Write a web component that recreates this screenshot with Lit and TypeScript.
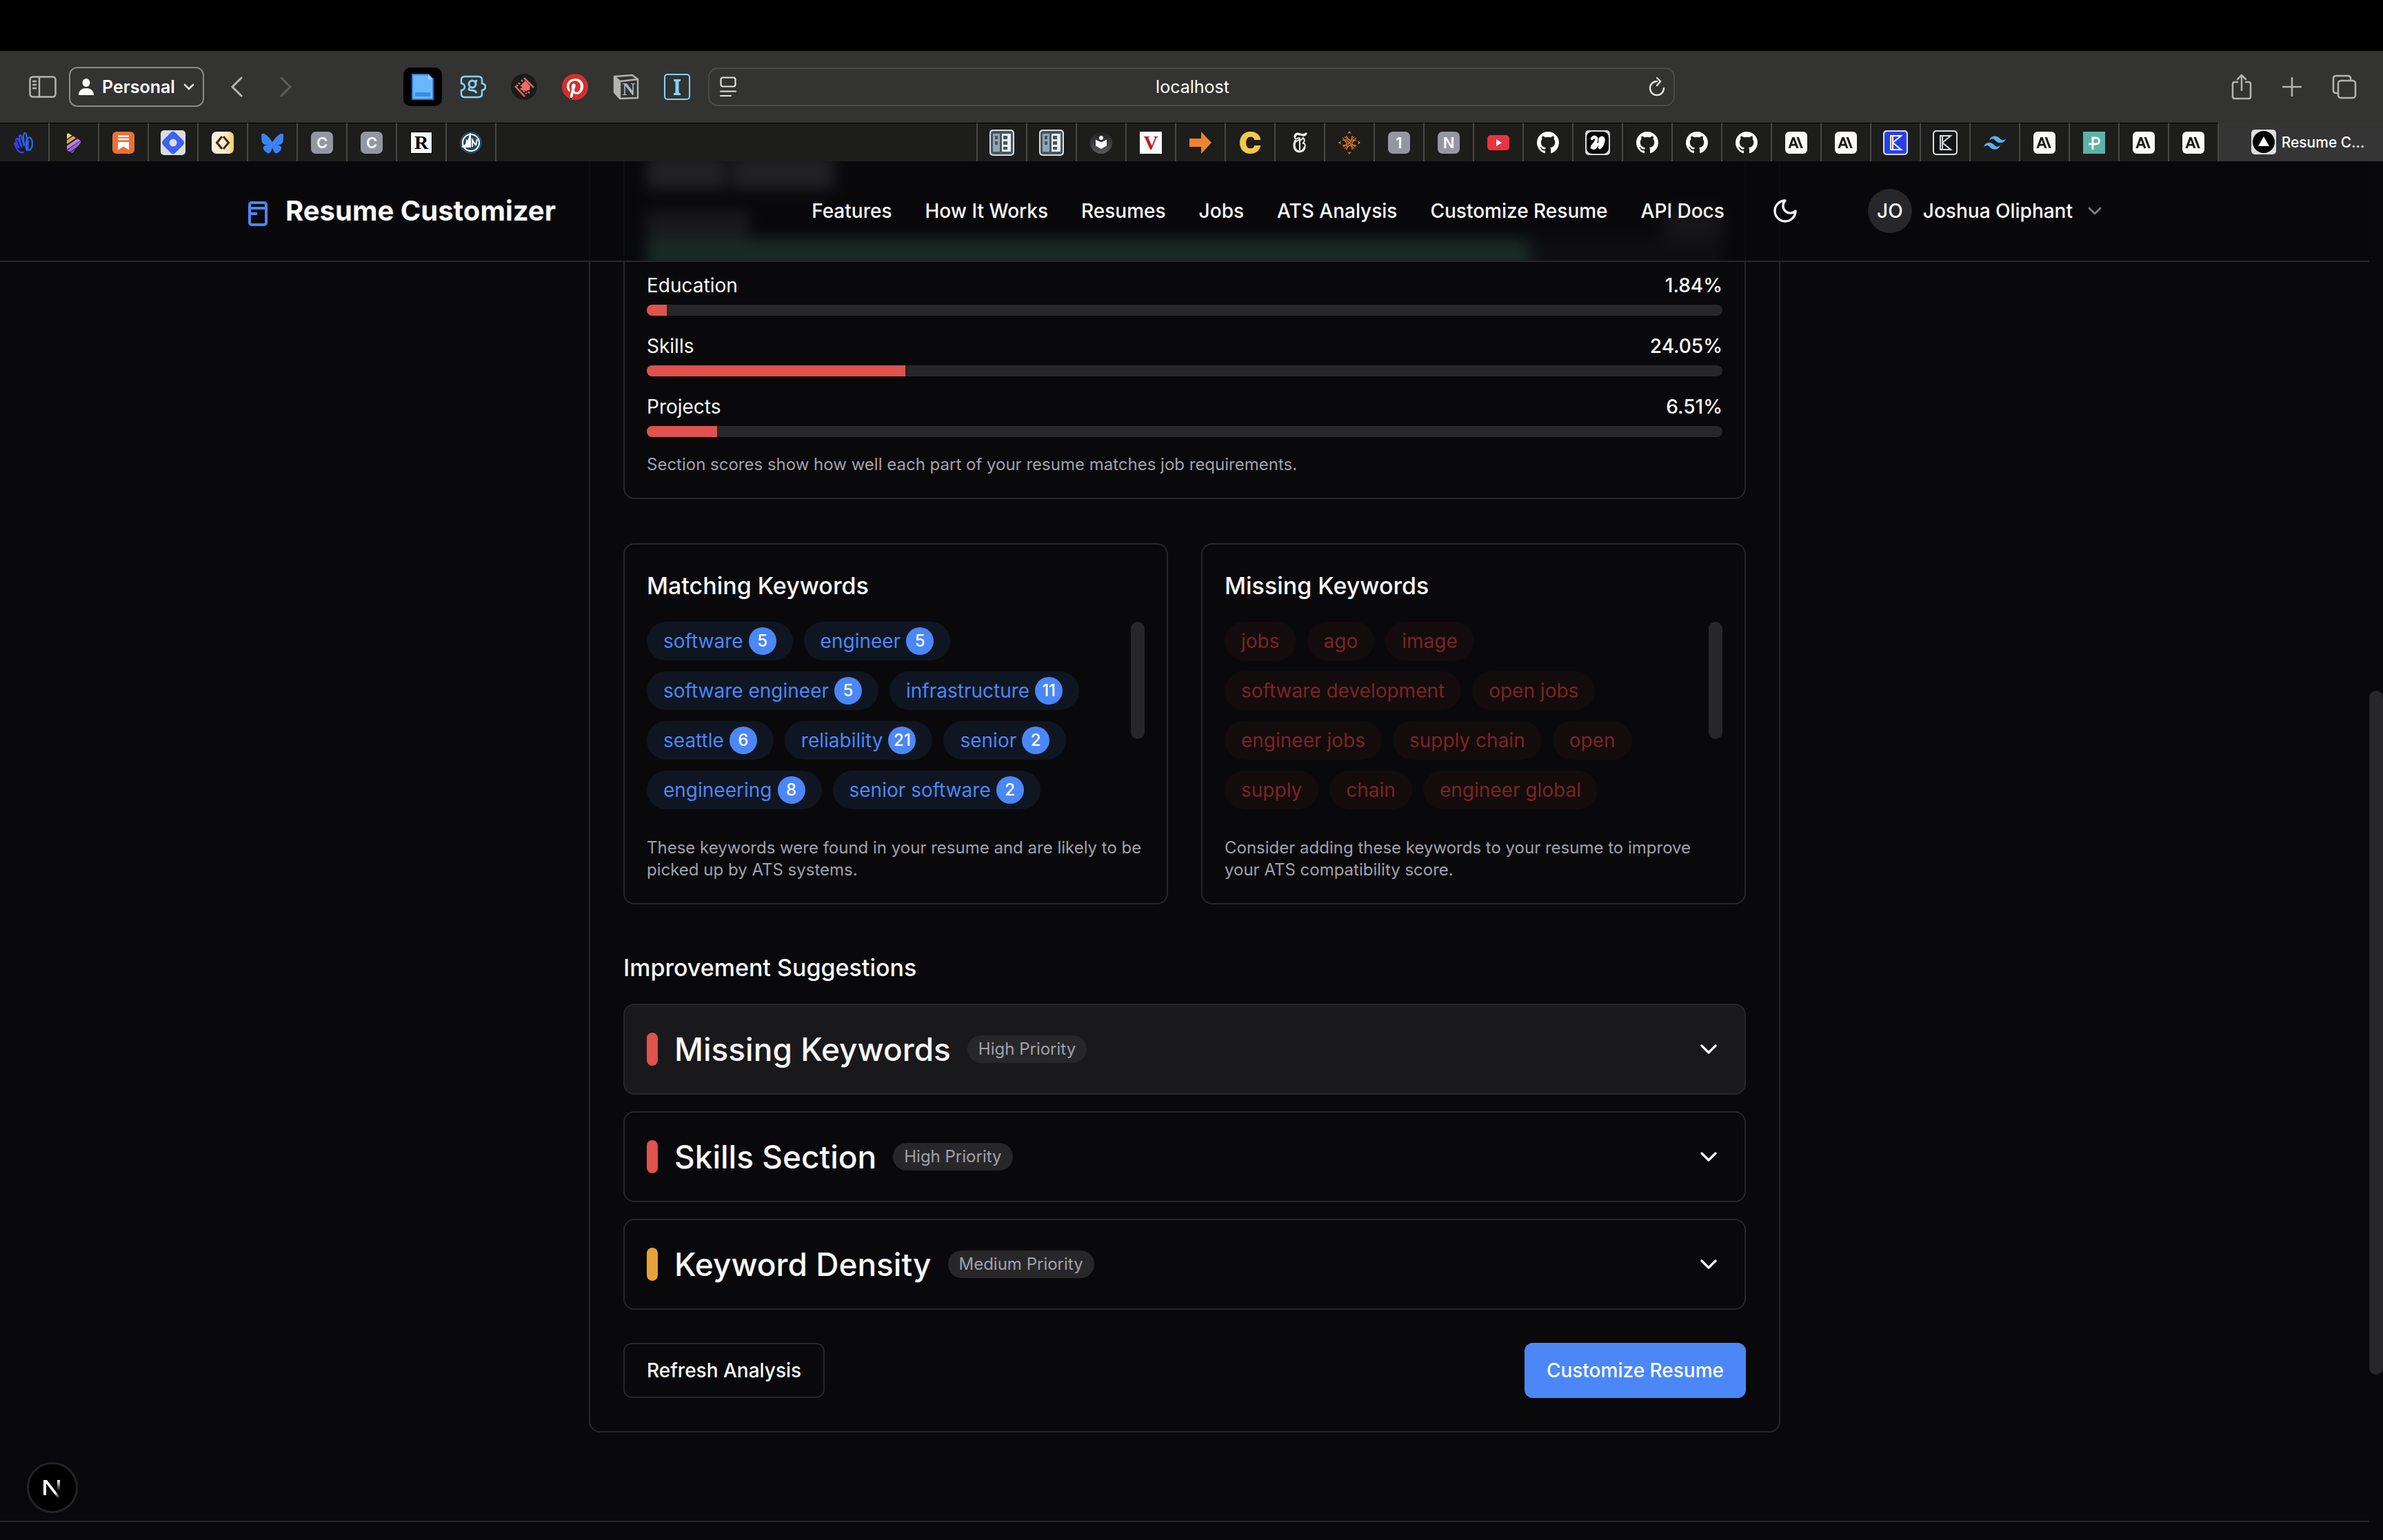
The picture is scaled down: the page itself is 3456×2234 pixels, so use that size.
import { LitElement, html, svg, css, nothing, type SVGTemplateResult, type TemplateResult } from "lit";
import { customElement, state } from "lit/decorators.js";
import { classMap } from "lit/directives/class-map.js";

/* ---------- icon artwork ---------- */

const GITHUB =
  "M8 0C3.58 0 0 3.58 0 8c0 3.54 2.29 6.53 5.47 7.59.4.07.55-.17.55-.38 0-.19-.01-.82-.01-1.49-2.01.37-2.53-.49-2.69-.94-.09-.23-.48-.94-.82-1.13-.28-.15-.68-.52-.01-.53.63-.01 1.08.58 1.23.82.72 1.21 1.87.87 2.33.66.07-.52.28-.87.51-1.07-1.78-.2-3.64-.89-3.64-3.95 0-.87.31-1.59.82-2.15-.08-.2-.36-1.02.08-2.12 0 0 .67-.21 2.2.82.64-.18 1.32-.27 2-.27s1.36.09 2 .27c1.53-1.04 2.2-.82 2.2-.82.44 1.1.16 1.92.08 2.12.51.56.82 1.27.82 2.15 0 3.07-1.87 3.75-3.65 3.95.29.25.54.73.54 1.48 0 1.07-.01 1.93-.01 2.2 0 .21.15.46.55.38A8.01 8.01 0 0 0 16 8c0-4.42-3.58-8-8-8z";
const BLUESKY =
  "M12 10.8c-1.087-2.114-4.046-6.053-6.798-7.995C2.566.944 1.561 1.266.902 1.565.139 1.908 0 3.08 0 3.768c0 .69.378 5.65.624 6.479.815 2.736 3.713 3.66 6.383 3.364-3.912.58-7.387 2.005-2.83 7.078 5.013 5.19 6.87-1.113 7.823-4.308.953 3.195 2.05 9.271 7.733 4.308 4.267-4.308 1.172-6.498-2.74-7.078 2.67.297 5.568-.628 6.383-3.364.246-.828.624-5.79.624-6.478 0-.69-.139-1.861-.902-2.206-.659-.298-1.664-.62-4.3 1.24C16.046 4.748 13.087 8.687 12 10.8Z";
const PINTEREST =
  "M12.017 0C5.396 0 .029 5.367.029 11.987c0 5.079 3.158 9.417 7.618 11.162-.105-.949-.199-2.403.041-3.439.219-.937 1.406-5.957 1.406-5.957s-.359-.72-.359-1.781c0-1.663.967-2.911 2.168-2.911 1.024 0 1.518.769 1.518 1.688 0 1.029-.653 2.567-.992 3.992-.285 1.193.6 2.165 1.775 2.165 2.128 0 3.768-2.245 3.768-5.487 0-2.861-2.063-4.869-5.008-4.869-3.41 0-5.409 2.562-5.409 5.199 0 1.033.394 2.143.889 2.741.099.12.112.225.085.345-.09.375-.293 1.199-.334 1.363-.053.225-.172.271-.401.165-1.495-.69-2.433-2.878-2.433-4.646 0-3.776 2.748-7.252 7.92-7.252 4.158 0 7.392 2.967 7.392 6.923 0 4.135-2.607 7.462-6.233 7.462-1.214 0-2.354-.629-2.758-1.379l-.749 2.848c-.269 1.045-1.004 2.352-1.498 3.146 1.123.345 2.306.535 3.55.535 6.607 0 11.985-5.365 11.985-11.987C23.97 5.39 18.592.026 11.985.026L12.017 0z";
const TAILWIND =
  "M12.001,4.8c-3.2,0-5.2,1.6-6,4.8c1.2-1.6,2.6-2.2,4.2-1.8c0.913,0.228,1.565,0.89,2.288,1.624C13.666,10.618,15.027,12,18.001,12c3.2,0,5.2-1.6,6-4.8c-1.2,1.6-2.6,2.2-4.2,1.8c-0.913-0.228-1.565-0.89-2.288-1.624C16.337,6.182,14.976,4.8,12.001,4.8z M6.001,12c-3.2,0-5.2,1.6-6,4.8c1.2-1.6,2.6-2.2,4.2-1.8c0.913,0.228,1.565,0.89,2.288,1.624c1.177,1.194,2.538,2.576,5.512,2.576c3.2,0,5.2-1.6,6-4.8c-1.2,1.6-2.6,2.2-4.2,1.8c-0.913-0.228-1.565-0.89-2.288-1.624C10.337,13.382,8.976,12,6.001,12z";

const icon = (w: number, h: number, body: SVGTemplateResult | SVGTemplateResult[]) =>
  html`<svg width=${w} height=${h} viewBox="0 0 ${w} ${h}" aria-hidden="true">${body}</svg>`;

const chevronDown = (size: number, cls = "") => html`
  <svg class=${cls} width=${size} height=${size} viewBox="0 0 24 24" fill="none" stroke="currentColor"
    stroke-width="2" stroke-linecap="round" stroke-linejoin="round" aria-hidden="true">
    <path d="m6 9 6 6 6-6" />
  </svg>`;

const letterTile = (letter: string) => svg`
  <rect x="2" y="2" width="32" height="32" rx="7" fill="#9596a2" />
  <text x="18" y="26" text-anchor="middle" font-size="22" font-weight="600" fill="#fff">${letter}</text>`;

const favicons: Record<string, () => SVGTemplateResult> = {
  hand: () => svg`
    <g fill="none" stroke="#3a3df0" stroke-width="2.4" stroke-linecap="round" stroke-linejoin="round">
      <path d="M17 32c-5 1-8-2-10-6-1-3-3-6-3-7 1-2 4 1 6 6" />
      <path d="M10 25C8 20 5 13 7 12c3-1 5 7 7 12" />
      <path d="M14 23C12 17 10 8 12 7c3 0 4 9 6 15" stroke="#2f50ee" />
      <path d="M18 21c-1-6-2-16 1-17 3 0 3 9 3 17" stroke="#2b63ee" />
      <path d="M22 29c-2-5-2-15 2-18 4-2 6 3 6 9 0 5-3 9-5 9-2-1-2-7-1-13" stroke="#2b63ee" />
    </g>`,
  stripes: () => svg`
    <defs><clipPath id="play"><path d="M8 3 28 15v3L16 33 8 29z" /></clipPath></defs>
    <g fill="none" stroke-width="4.500" clip-path="url(#play)">
      <path d="M4 12 18 2" stroke="#eed35c" stroke-width="6" />
      <path d="M4 20 26 5" stroke="#e4a354" />
      <path d="M4 28 32 9" stroke="#c07fe0" />
      <path d="M8 32 32 15" stroke="#a55be0" />
      <path d="M12 36 32 22" stroke="#5b7fd6" />
    </g>`,
  substack: () => svg`
    <rect x="2" y="2" width="32" height="32" rx="6" fill="#ed6f36" />
    <path d="M10 8.500h16M10 13h16" stroke="#fff" stroke-width="2.400" />
    <path d="M10 17h16v11.500l-8-5-8 5z" fill="#fff" />`,
  diamond: () => svg`
    <rect width="36" height="36" rx="5" fill="#dcdde0" />
    <path d="M14 4q4-5 8 0l10 10q4 4 0 8L22 32q-4 5-8 0L4 22q-4-4 0-8z" fill="#3a62f5" />
    <circle cx="18" cy="18" r="5.500" fill="#dcdde0" />`,
  gold: () => svg`
    <defs><linearGradient id="gold" x1="0" x2="1" y1="0" y2="0">
      <stop offset="0" stop-color="#fbeee0" /><stop offset=".65" stop-color="#fbeccb" /><stop offset="1" stop-color="#f2cd5a" />
    </linearGradient></defs>
    <rect x="2" y="2" width="32" height="32" rx="7" fill="url(#gold)" />
    <path d="M17 9 9.500 18l7.500 9M19 9l7.500 9-7.500 9" fill="none" stroke="#3a2716" stroke-width="3" />`,
  bluesky: () => svg`<path transform="translate(2 3) scale(1.340)" d=${BLUESKY} fill="#3b82f7" />`,
  c: () => letterTile("C"),
  one: () => letterTile("1"),
  n: () => letterTile("N"),
  r: () => svg`
    <rect x="2" y="2" width="32" height="32" fill="#000" /><rect x="3" y="3" width="30" height="30" fill="#f6f8fb" />
    <text x="18" y="27" text-anchor="middle" font-family="Liberation Serif, serif" font-size="28" font-weight="700" fill="#000">R</text>`,
  sail: () => svg`
    <circle cx="18" cy="18" r="16" fill="#234a60" />
    <circle cx="18" cy="18" r="12" fill="none" stroke="#fff" stroke-width="2" />
    <path d="M17 4v20H5l6-3 1-6 4 5zM20 24V14l5 8M25 22l2-9" fill="none" stroke="#fff" stroke-width="2" />
    <path d="M17 4v20H5l6-3z" fill="#fff" />`,
  panel: () => svg`
    <rect width="36" height="38" y="-1" rx="5" fill="#d8dde0" /><rect x="2" y="1" width="32" height="34" rx="4" fill="#465660" />
    <rect x="5" y="5" width="10" height="26" fill="#90a4b2" /><rect x="18" y="5" width="13" height="26" fill="#eceff4" />
    <path d="M8 8h4v5H8zM8 16h4v5H8zM20 8h6v5h-6zM20 16h6v5h-6zM20 24h6v4h-6z" fill="#465660" />`,
  reader: () => svg`
    <defs><linearGradient id="rd" x1="0" x2="0" y1="0" y2="1"><stop offset="0" stop-color="#202022" /><stop offset="1" stop-color="#5a5a5c" /></linearGradient></defs>
    <circle cx="18" cy="18" r="16" fill="url(#rd)" />
    <circle cx="18" cy="11" r="3" fill="#fff" /><path d="M10 13.500l8 4 8-4v9l-8 4.500-8-4.500z" fill="#fff" />`,
  v: () => svg`
    <rect x="2" y="2" width="32" height="32" fill="#fff" />
    <text x="18" y="28" text-anchor="middle" font-family="Liberation Serif, serif" font-size="29" font-weight="700" fill="#b8201f">V</text>`,
  arrow: () => svg`<path d="M2 12h17V2l15 16-15 16V24H2z" fill="#ef8330" />`,
  bigc: () => svg`<text x="18" y="34" text-anchor="middle" font-size="44" font-weight="900" fill="#f3c84b">C</text>`,
  times: () => svg`
    <g fill="none" stroke="#f0f0f0" stroke-linecap="round">
      <path d="M11 9c1-5 5-4 8-3s6 2 8-1" stroke-width="3.400" />
      <path d="M11 9c-1 4 3 4 5 2" stroke-width="1.800" />
      <path d="M12 15c-3 4-3 12 2 15 5 2 10 0 11-5" stroke-width="3.200" />
      <path d="M12 16c3 0 5-2 6-5M18 12v16M25 25c2-4 0-7-3-6 3-2 4-5 1-8l-3 3" stroke-width="2" />
    </g>`,
  lattice: () => svg`
    <g fill="none" stroke="#e2762d" stroke-width="1.600">
      <path d="M14 8q0 4 4 6t4-6M14 28q0-4 4-6t4 6M8 14q4 0 6 4t-6 4M28 14q-4 0-6 4t6 4" />
      <path d="m11 9 14 18M25 9 11 27M8 11l20 14M28 11 8 25" stroke-width="1.200" stroke-dasharray="3 1" />
    </g>
    <path d="m18 1 3 4-3-1-3 1zM18 35l3-4-3 1-3-1zM2 18l4-3-1 3 1 3zM34 18l-4-3 1 3-1 3z" fill="#e2762d" />`,
  youtube: () => svg`<rect x="2" y="7" width="32" height="22" rx="5" fill="#ea3340" /><path d="m15 13 8 5-8 5z" fill="#fff" />`,
  github: () => svg`<path transform="translate(2 2) scale(2)" d=${GITHUB} fill="#fff" />`,
  scribble: () => svg`
    <rect width="36" height="36" rx="5" fill="#d9dcdf" /><rect x="2" y="2" width="32" height="32" rx="8" fill="#000" />
    <path d="M10 12c3-4 7-2 6 3s-6 6-6 10c3 2 6 0 7-5" fill="none" stroke="#fff" stroke-width="4.500" stroke-linecap="round" />
    <path d="M21 12c4-4 7-1 6 4s-2 8-6 10c-2-2 0-8 0-14z" fill="#fff" stroke="#fff" stroke-width="3" stroke-linejoin="round" />`,
  anthropic: () => svg`
    <rect x="2" y="2" width="32" height="32" rx="6" fill="#faf9f6" />
    <path d="M12.300 10h3.200L21.500 26h-3.300l-1.200-3.400h-6.100L9.700 26H6.400zm-.4 9.700h4.100l-2-5.800zM18.500 10h3.300l6 16h-3.300z" fill="#191918" />`,
  kblue: () => svg`
    <rect width="36" height="36" rx="5" fill="#d9dcf5" /><rect x="2" y="2" width="32" height="32" rx="4" fill="#2b3fe6" />
    <path d="M11 8h15L14 18l12 10H11zM14 8v20" fill="none" stroke="#fff" stroke-width="2" />`,
  kblack: () => svg`
    <rect width="36" height="36" rx="5" fill="#d9dcdf" /><rect x="2" y="2" width="32" height="32" rx="4" fill="#141415" />
    <path d="M11 8h15L14 18l12 10H11zM14 8v20" fill="none" stroke="#d9dcdf" stroke-width="2" />`,
  tailwind: () => svg`<path transform="translate(2 2) scale(1.340)" d=${TAILWIND} fill="#54b4f2" />`,
  p: () => svg`
    <rect x="2" y="2" width="32" height="32" fill="#5bb3a6" />
    <path d="M16 28V11h5a4.500 4.500 0 0 1 0 9H10" fill="none" stroke="#fff" stroke-width="3" />`,
};

const pinnedTabs = ["hand", "stripes", "substack", "diamond", "gold", "bluesky", "c", "c", "r", "sail"];
const openTabs = [
  "panel", "panel", "reader", "v", "arrow", "bigc", "times", "lattice", "one", "n", "youtube", "github",
  "scribble", "github", "github", "github", "anthropic", "anthropic", "kblue", "kblack", "tailwind",
  "anthropic", "p", "anthropic", "anthropic",
];

/* ---------- browser window chrome ---------- */

@customElement("browser-toolbar")
export class BrowserToolbar extends LitElement {
  static styles = css`
    :host { display: grid; grid-template-columns: 1fr minmax(0, 1402px) 1fr; align-items: center; height: 104px; background: #333332; color: #fff; }
    button { font: inherit; color: inherit; background: none; border: 0; padding: 0; display: flex; align-items: center; justify-content: center; }
    svg { display: block; flex: none; }
    .left { display: flex; align-items: center; padding: 0 26px 0 42px; }
    .profile { width: 196px; height: 58px; box-sizing: border-box; border: 2px solid #8a8a89; border-radius: 12px; margin: 0 38px 0 18px; gap: 12px; font-size: 25px; font-weight: 600; }
    .history { display: flex; gap: 54px; color: #b4b4b3; }
    .off { color: #5c5c5b; }
    .extensions { display: flex; align-items: center; gap: 36px; margin-left: auto; }
    .tile { width: 56px; height: 56px; border-radius: 10px; background: #000; margin-right: -10px; }
    .address { display: grid; grid-template-columns: 24px 1fr 24px; align-items: center; height: 56px; box-sizing: border-box; padding: 0 12px 0 15px; border: 2px solid #4a4a49; border-radius: 14px; }
    .address input { min-width: 0; border: 0; background: none; outline: 0; color: #fff; font: 400 25px/32px Inter, sans-serif; text-align: center; padding: 0; }
    .right { display: flex; align-items: center; justify-content: flex-end; gap: 44px; padding-right: 38px; color: #b4b4b3; }
  `;

  render() {
    return html`
      <div class="left">
        <button aria-label="Toggle sidebar">
          ${icon(40, 32, svg`<g fill="none" stroke="#b4b4b3" stroke-width="2.500"><rect x="1.500" y="1.500" width="37" height="29" rx="4" /><path d="M15 1.500v29M5 8h6M5 13h6M5 18h6" /></g>`)}
        </button>
        <button class="profile">
          ${icon(22, 24, svg`<g fill="#fff"><ellipse cx="11" cy="6" rx="5.500" ry="6" /><path d="M0 24c0-7 5-10 11-10s11 3 11 10z" /></g>`)}
          <span>Personal</span>
          ${icon(16, 10, svg`<path d="m2 2 6 6 6-6" fill="none" stroke="#e4e4e4" stroke-width="2.600" stroke-linecap="round" />`)}
        </button>
        <div class="history">
          <button aria-label="Back">${icon(18, 30, svg`<path d="M16 2 3 15l13 13" fill="none" stroke="currentColor" stroke-width="3" stroke-linecap="round" />`)}</button>
          <button class="off" aria-label="Forward" disabled>${icon(18, 30, svg`<path d="m2 2 13 13L2 28" fill="none" stroke="currentColor" stroke-width="3" stroke-linecap="round" />`)}</button>
        </div>
        <div class="extensions">
          <button class="tile" aria-label="Documents">
            ${icon(32, 38, svg`<path d="M1 1h23l7 7v29H1z" fill="#68b8fc" stroke="#2a7bd4" stroke-width="2" /><path d="M24 1v7h7" fill="#9fd4ff" /><path d="M5 27h22v6H5z" fill="#3a8ce0" />`)}
          </button>
          <button aria-label="Grammar add-on">
            ${icon(38, 38, svg`<path d="M7 4h20q5 0 5 5v5q5 1 5 5t-5 5v5q0 5-5 5H7q-5 0-5-5v-5q5-1 5-5t-5-5V9q0-5 5-5z" fill="none" stroke="#86d4ff" stroke-width="2.500" /><g fill="none" stroke="#86d4ff" stroke-width="3"><circle cx="18" cy="15" r="5" /><path d="M22 11.500l3-2M14 20c-2 3-1 4 3 4 4 0 6 1 7 4" /></g>`)}
          </button>
          <button aria-label="Recorder add-on">
            ${icon(38, 38, svg`<circle cx="19" cy="19" r="19" fill="#1b1b1c" /><path d="m21 10 7 8-1 6H16v-9z" fill="#ef6b66" /><path d="M19 6l14 14M6 18l14 15" stroke="#ef6b66" stroke-width="2.400" /><path d="M15 9l5 5M11 13l6 6M14 21l9 8M21 23l6 5M8 16l3 3" stroke="#ef6b66" stroke-width="2.400" stroke-dasharray="3 2" />`)}
          </button>
          <button aria-label="Pinterest">
            ${icon(38, 38, svg`<circle cx="19" cy="19" r="17" fill="#fff" /><path transform="scale(1.583)" d=${PINTEREST} fill="#d32f2c" />`)}
          </button>
          <button aria-label="Notion">
            ${icon(38, 38, svg`<g fill="none" stroke="#b4b4b3" stroke-width="2.400" stroke-linejoin="round"><path d="M2 4 28 2l8 6v27L10 36l-8-9zM2 4l8 7 26-3M10 11v25" /></g><path d="M2 4v23l8 9V11z" fill="#b4b4b3" /><text x="23" y="31" text-anchor="middle" font-family="Liberation Serif, serif" font-weight="700" font-size="26" fill="#b4b4b3">N</text>`)}
          </button>
          <button aria-label="Instapaper">
            ${icon(38, 38, svg`<rect x="1" y="1" width="36" height="36" rx="4" fill="none" stroke="#86d4ff" stroke-width="2" /><path d="M14 8h10v2.500l-2.500 1v16l2.500 1V31H14v-2.500l2.500-1v-16l-2.500-1z" fill="#86d4ff" />`)}
          </button>
        </div>
      </div>
      <div class="address">
        ${icon(24, 30, svg`<g fill="none" stroke="#e2e2e1" stroke-width="2.200" stroke-linecap="round"><rect x="1.500" y="1.500" width="21" height="13" rx="3" /><path d="M1 21.500h22M1 28h15" /></g>`)}
        <input aria-label="Address" value="localhost" />
        <button aria-label="Reload">
          ${icon(24, 28, svg`<g fill="none" stroke="#e2e2e1" stroke-width="2.400" stroke-linecap="round"><path d="M12 6A10 10 0 1 0 22 16M12 1l5 5-5 6" /></g>`)}
        </button>
      </div>
      <div class="right">
        <button aria-label="Share">${icon(30, 38, svg`<g fill="none" stroke="currentColor" stroke-width="2.500" stroke-linecap="round" stroke-linejoin="round"><path d="M9 12H5q-3 0-3 3v18q0 3 3 3h20q3 0 3-3V15q0-3-3-3h-4M15 24V2M9 8l6-6 6 6" /></g>`)}</button>
        <button aria-label="New tab">${icon(28, 28, svg`<path d="M14 1v26M1 14h26" stroke="currentColor" stroke-width="2.500" stroke-linecap="round" />`)}</button>
        <button aria-label="Tab overview">${icon(36, 36, svg`<g fill="none" stroke="currentColor" stroke-width="2.500"><rect x="9" y="9" width="25" height="25" rx="4" /><path d="M9 27H6q-4 0-4-4V6q0-4 4-4h17q4 0 4 4v3" /></g>`)}</button>
      </div>
    `;
  }
}

@customElement("browser-tabs")
export class BrowserTabs extends LitElement {
  static styles = css`
    :host { display: flex; height: 56px; background: #1d1d1c; color: #fff; }
    button { font: inherit; color: inherit; background: none; padding: 0; border: 0; box-sizing: border-box; display: flex; align-items: center; justify-content: center; }
    svg { display: block; flex: none; font-family: Inter, sans-serif; overflow: visible; }
    .tab { width: 72px; flex: none; border-top: 1px solid #000; border-right: 2px solid #474746; }
    .space { flex: 1; border-top: 1px solid #000; border-right: 2px solid #474746; }
    .current { width: 238px; flex: none; gap: 8px; padding-left: 20px; background: #353535; font-size: 21px; font-weight: 500; }
  `;

  private tab = (name: string) => html`<button class="tab" aria-label="Tab">${icon(36, 36, favicons[name]())}</button>`;

  render() {
    return html`
      ${pinnedTabs.map(this.tab)}
      <div class="space"></div>
      ${openTabs.map(this.tab)}
      <button class="current">
        ${icon(36, 36, svg`<rect width="36" height="36" rx="5" fill="#dedfe1" /><circle cx="18" cy="18" r="16" fill="#000" /><path d="m18 10 8 14H10z" fill="#fff" />`)}
        <span>Resume C...</span>
      </button>
    `;
  }
}

/* ---------- page ---------- */

@customElement("site-header")
export class SiteHeader extends LitElement {
  static styles = css`
    :host { display: block; position: relative; z-index: 1; border-bottom: 2px solid #27272a; background: rgba(9, 9, 11, 0.8); }
    .bar { display: flex; align-items: center; height: 144px; max-width: 2800px; margin: 0 auto; padding: 0 32px; box-sizing: border-box; font-size: 28px; line-height: 40px; font-weight: 500; }
    a { color: inherit; text-decoration: none; }
    button { font: inherit; color: inherit; background: none; border: 0; padding: 0; display: flex; align-items: center; justify-content: center; }
    svg { display: block; flex: none; }
    .brand { display: flex; align-items: center; gap: 16px; font-size: 40px; line-height: 56px; font-weight: 700; }
    nav { display: flex; gap: 48px; margin-left: auto; }
    .theme { width: 80px; height: 80px; margin: 0 48px; }
    .user { gap: 16px; padding: 0 32px; height: 80px; }
    .avatar { width: 64px; height: 64px; border-radius: 50%; background: #27272a; display: flex; align-items: center; justify-content: center; }
    .dim { opacity: 0.5; }
  `;

  render() {
    const links = ["Features", "How It Works", "Resumes", "Jobs", "ATS Analysis", "Customize Resume", "API Docs"];
    return html`
      <div class="bar">
        <a class="brand" href="#">
          <svg width="48" height="48" viewBox="0 0 48 48" fill="none" stroke="#4b87f7" stroke-width="4" aria-hidden="true">
            <rect x="12" y="12" width="24" height="32" rx="3" />
            <path d="M14 20h20M14 28h9" />
          </svg>
          <span>Resume Customizer</span>
        </a>
        <nav>${links.map((l) => html`<a href="#">${l}</a>`)}</nav>
        <button class="theme" aria-label="Toggle theme">
          <svg width="40" height="40" viewBox="0 0 24 24" fill="none" stroke="currentColor" stroke-width="2" stroke-linecap="round" stroke-linejoin="round" aria-hidden="true">
            <path d="M12 3a6 6 0 0 0 9 9 9 9 0 1 1-9-9Z" />
          </svg>
        </button>
        <button class="user">
          <span class="avatar">JO</span>
          <span>Joshua Oliphant</span>
          ${chevronDown(32, "dim")}
        </button>
      </div>
    `;
  }
}

interface Score { name: string; label: string; value: number }
interface Keyword { word: string; count?: number }
interface Suggestion { title: string; priority: string; medium?: boolean; active?: boolean }

const scores: Score[] = [
  { name: "Education", label: "1.84%", value: 1.84 },
  { name: "Skills", label: "24.05%", value: 24.05 },
  { name: "Projects", label: "6.51%", value: 6.51 },
];

const matching: Keyword[] = [
  { word: "software", count: 5 }, { word: "engineer", count: 5 }, { word: "software engineer", count: 5 },
  { word: "infrastructure", count: 11 }, { word: "seattle", count: 6 }, { word: "reliability", count: 21 },
  { word: "senior", count: 2 }, { word: "engineering", count: 8 }, { word: "senior software", count: 2 },
];

const missing: Keyword[] = [
  "jobs", "ago", "image", "software development", "open jobs", "engineer jobs", "supply chain", "open",
  "supply", "chain", "engineer global",
].map((word) => ({ word }));

const suggestions: Suggestion[] = [
  { title: "Missing Keywords", priority: "High Priority", active: true },
  { title: "Skills Section", priority: "High Priority" },
  { title: "Keyword Density", priority: "Medium Priority", medium: true },
];

@customElement("ats-report")
export class AtsReport extends LitElement {
  static styles = css`
    :host { display: block; box-sizing: border-box; max-width: 1728px; margin: 0 auto; padding: 0 48px 48px; border: 2px solid #27272a; border-top: 0; border-radius: 0 0 16px 16px; font-size: 28px; line-height: 40px; }
    h2, h3, p, ul { margin: 0; padding: 0; }
    h2, h3 { font-size: 34px; line-height: 56px; font-weight: 500; }
    button { font: inherit; color: inherit; background: none; border: 0; padding: 0; }
    .card { border: 2px solid #27272a; border-radius: 16px; padding: 32px; }
    .card h3 { margin-bottom: 24px; }
    .note { margin-top: 24px; font-size: 24px; line-height: 32px; color: #a1a1aa; }
    .scores { display: grid; gap: 24px; }
    .line { display: flex; justify-content: space-between; margin-bottom: 8px; }
    .value { font-weight: 500; }
    .track { height: 16px; border-radius: 8px; background: #27272a; overflow: hidden; }
    .fill { height: 100%; background: #df524d; }
    /* Rows scrolled under the translucent header, softened like frosted glass and cut off at its lower edge */
    .veil { filter: blur(10px); clip-path: inset(-64px -64px 16px); }
    .veil-title { display: flex; gap: 8px; height: 48px; margin-bottom: 32px; }
    .veil-title span { width: 116px; background: #828284; }
    .veil-title span + span { width: 148px; }
    .veil-line { display: flex; justify-content: space-between; height: 40px; }
    .veil-line span { width: 148px; background: #5c5c5e; }
    .veil-line span + span { width: 86px; background: #4c4c4e; }
    .veil-track { height: 48px; background: #2c2c2e; }
    .veil-fill { width: 82%; height: 100%; background: #59ae83; }
    .pair { display: grid; grid-template-columns: 1fr 1fr; gap: 48px; margin: 64px 0; }
    .scroll { display: flex; height: 288px; overflow: hidden; }
    .pills { flex: 1; min-width: 0; display: flex; flex-wrap: wrap; align-content: flex-start; gap: 16px; list-style: none; }
    .pill { display: flex; align-items: center; gap: 8px; height: 56px; padding: 0 24px; border-radius: 28px; color: #7b2422; background: #130c0d; }
    .pill.found { color: #4b87f7; background: #0f1622; }
    .count { width: 40px; height: 40px; border-radius: 50%; background: #4b87f7; color: #fff; font-size: 24px; font-weight: 500; text-align: center; }
    .thumb { width: 20px; height: 170px; border-radius: 10px; background: #27272a; }
    .list { display: grid; gap: 24px; margin: 24px 0 48px; }
    .item { display: flex; width: 100%; align-items: center; gap: 24px; box-sizing: border-box; padding: 32px; border: 2px solid #27272a; border-radius: 16px; font-size: 46px; line-height: 64px; font-weight: 500; }
    .item.active { background: #19191b; }
    .flag { width: 16px; height: 48px; border-radius: 8px; background: #df524d; }
    .flag.medium { background: #e8a23a; }
    .tag { padding: 4px 16px; border-radius: 20px; background: #27272a; color: #a1a1aa; font-size: 24px; line-height: 32px; font-weight: 400; }
    .item svg { display: block; margin-left: auto; }
    .actions { display: flex; justify-content: space-between; }
    .action { height: 80px; box-sizing: border-box; padding: 0 32px; border-radius: 12px; font-weight: 500; }
    .action.outline { border: 2px solid #27272a; }
    .action.primary { background: #4b87f7; color: #fff; }
  `;

  @state() private active = suggestions.findIndex((s) => s.active);

  private keywords(title: string, words: Keyword[], note: string): TemplateResult {
    return html`
      <section class="card">
        <h3>${title}</h3>
        <div class="scroll">
          <ul class="pills">
            ${words.map(({ word, count }) => html`
              <li class=${classMap({ pill: true, found: count !== undefined })}>
                <span>${word}</span>${count !== undefined ? html`<span class="count">${count}</span>` : nothing}
              </li>`)}
          </ul>
          <div class="thumb"></div>
        </div>
        <p class="note">${note}</p>
      </section>`;
  }

  render() {
    return html`
      <section class="card">
        <div class="veil" aria-hidden="true">
          <div class="veil-title"><span></span><span></span></div>
          <div class="veil-line"><span></span><span></span></div>
          <div class="veil-track"><div class="veil-fill"></div></div>
        </div>
        <div class="scores">
          ${scores.map((s) => html`
            <div>
              <div class="line"><span>${s.name}</span><span class="value">${s.label}</span></div>
              <div class="track"><div class="fill" style="width:${s.value}%"></div></div>
            </div>`)}
        </div>
        <p class="note">Section scores show how well each part of your resume matches job requirements.</p>
      </section>
      <div class="pair">
        ${this.keywords("Matching Keywords", matching, "These keywords were found in your resume and are likely to be picked up by ATS systems.")}
        ${this.keywords("Missing Keywords", missing, "Consider adding these keywords to your resume to improve your ATS compatibility score.")}
      </div>
      <h2>Improvement Suggestions</h2>
      <div class="list">
        ${suggestions.map((s, i) => html`
          <button class=${classMap({ item: true, active: i === this.active })} @mouseenter=${() => (this.active = i)}>
            <span class=${classMap({ flag: true, medium: !!s.medium })}></span>
            <span>${s.title}</span>
            <span class="tag">${s.priority}</span>
            ${chevronDown(40)}
          </button>`)}
      </div>
      <div class="actions">
        <button class="action outline">Refresh Analysis</button>
        <button class="action primary">Customize Resume</button>
      </div>
    `;
  }
}

@customElement("app-root")
export class AppRoot extends LitElement {
  static styles = css`
    :host { display: flex; flex-direction: column; height: 100vh; overflow: hidden; background: #000; color: #fafafa; font-family: Inter, sans-serif; }
    .notch { flex: none; height: 74px; }
    .window { flex: 1; min-height: 0; position: relative; display: flex; overflow: hidden; background: #09090b; }
    .page { flex: 1; min-width: 0; }
    .report { padding: 0 32px; margin-top: -188px; }
    footer { margin-top: 128px; border-top: 2px solid #27272a; }
    .rail { width: 20px; position: relative; }
    .rail-thumb { position: absolute; left: 0; right: 0; top: 38.4%; height: 49.6%; border-radius: 10px; background: #27272a; }
    .dev { position: absolute; left: 39px; bottom: 39px; width: 74px; height: 74px; box-sizing: border-box; padding: 0; border: 3px solid #232324; border-radius: 50%; background: #000; display: flex; align-items: center; justify-content: center; }
  `;

  render() {
    return html`
      <div class="notch"></div>
      <browser-toolbar></browser-toolbar>
      <browser-tabs></browser-tabs>
      <div class="window">
        <div class="page">
          <site-header></site-header>
          <main class="report"><ats-report></ats-report></main>
          <footer></footer>
        </div>
        <div class="rail"><div class="rail-thumb"></div></div>
        <button class="dev" aria-label="Open developer tools">
          <svg width="28" height="32" viewBox="0 0 28 32" aria-hidden="true">
            <defs>
              <linearGradient id="a" gradientUnits="userSpaceOnUse" x1="15" y1="17" x2="25" y2="30"><stop offset=".4" stop-color="#fff" /><stop offset="1" stop-color="#fff" stop-opacity="0" /></linearGradient>
              <linearGradient id="b" gradientUnits="userSpaceOnUse" x1="0" y1="5" x2="0" y2="21"><stop offset="0" stop-color="#fff" /><stop offset="1" stop-color="#fff" stop-opacity="0" /></linearGradient>
            </defs>
            <path d="M1 5h5l20 26-3 2L5 10v17H1z" fill="url(#a)" />
            <rect x="21" y="5" width="4" height="16" fill="url(#b)" />
          </svg>
        </button>
      </div>
    `;
  }
}
